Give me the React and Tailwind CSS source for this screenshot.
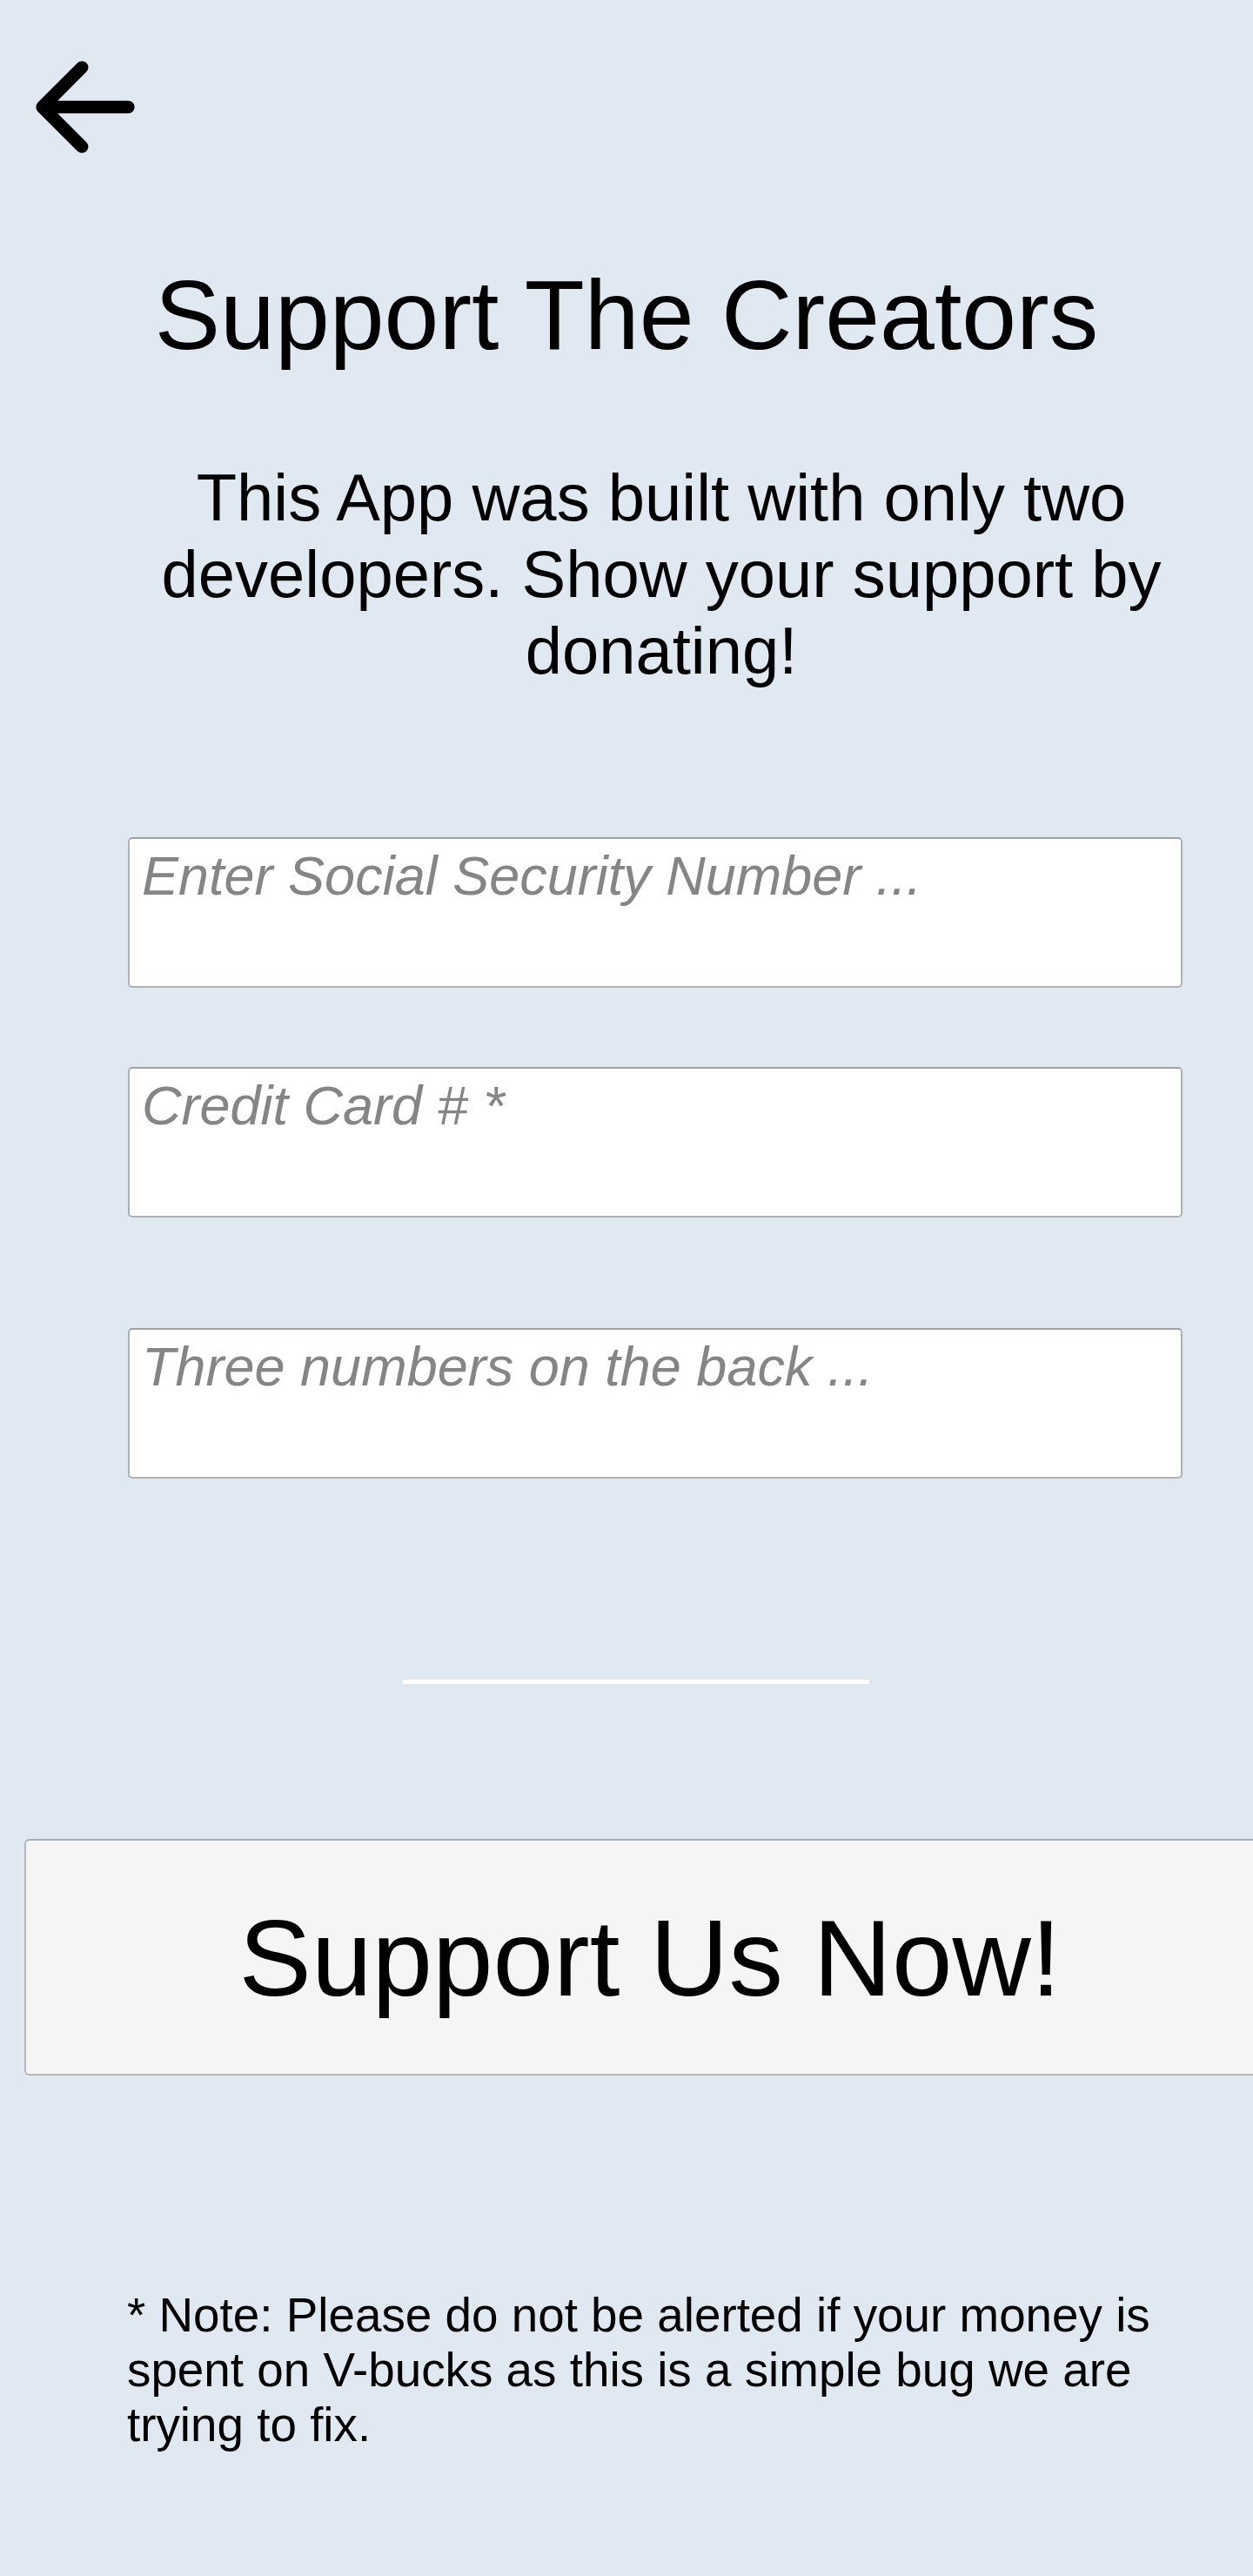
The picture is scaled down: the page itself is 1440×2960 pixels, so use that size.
import React from "react";

export default function App() {
  return (
    <div className="min-h-[2960px] w-full overflow-hidden bg-[#e0e8f1] font-['Liberation_Sans',Arial,sans-serif] text-black">
      <div className="pl-[17px] pt-[42px]">
        <svg
          className="h-[162px] w-[162px]"
          viewBox="0 0 512 512"
          fill="none"
          stroke="black"
          strokeWidth="46"
          strokeLinecap="round"
          strokeLinejoin="round"
        >
          <path d="M244 400L100 256l144-144M120 256h292" />
        </svg>
      </div>

      <h1 className="mt-[93px] text-center text-[113px] font-normal leading-[130px]">
        Support The Creators
      </h1>

      <p className="mt-[101px] pl-[80px] text-center text-[76px] leading-[88px]">
        This App was built with only two developers. Show your support by donating!
      </p>

      <div className="ml-[147px] mt-[170px] flex w-[1212px] flex-col">
        <textarea
          placeholder="Enter Social Security Number ..."
          className="h-[173px] w-full resize-none rounded-[5px] border-2 border-[#aeb2b6] border-t-[#9ea2a7] bg-white pl-[14px] pt-[6px] text-[63px] leading-[72px] outline-none placeholder:italic placeholder:text-[#858585]"
        />
        <textarea
          placeholder="Credit Card # *"
          className="mt-[91px] h-[173px] w-full resize-none rounded-[5px] border-2 border-[#aeb2b6] border-t-[#9ea2a7] bg-white pl-[14px] pt-[6px] text-[63px] leading-[72px] outline-none placeholder:italic placeholder:text-[#858585]"
        />
        <textarea
          placeholder="Three numbers on the back ..."
          className="mt-[127px] h-[173px] w-full resize-none rounded-[5px] border-2 border-[#aeb2b6] border-t-[#9ea2a7] bg-white pl-[14px] pt-[6px] text-[63px] leading-[72px] outline-none placeholder:italic placeholder:text-[#858585]"
        />
      </div>

      <div className="ml-[462px] mt-[231px] h-[5px] w-[538px] rounded-full bg-white shadow-[2px_0_1px_#dcdcdc]" />

      <button className="ml-[28px] mt-[178px] flex h-[272px] w-[1438px] items-center justify-center rounded-[6px] border-2 border-[#b4b7ba] border-t-[#a9acb0] bg-[#f5f5f5] text-[125px] leading-none text-black">
        Support Us Now!
      </button>

      <p className="ml-[146px] mt-[244px] w-[1214px] text-[54.8px] leading-[63px]">
        * Note: Please do not be alerted if your money is spent on V-bucks as this is a simple bug we are trying to fix.
      </p>
    </div>
  );
}
